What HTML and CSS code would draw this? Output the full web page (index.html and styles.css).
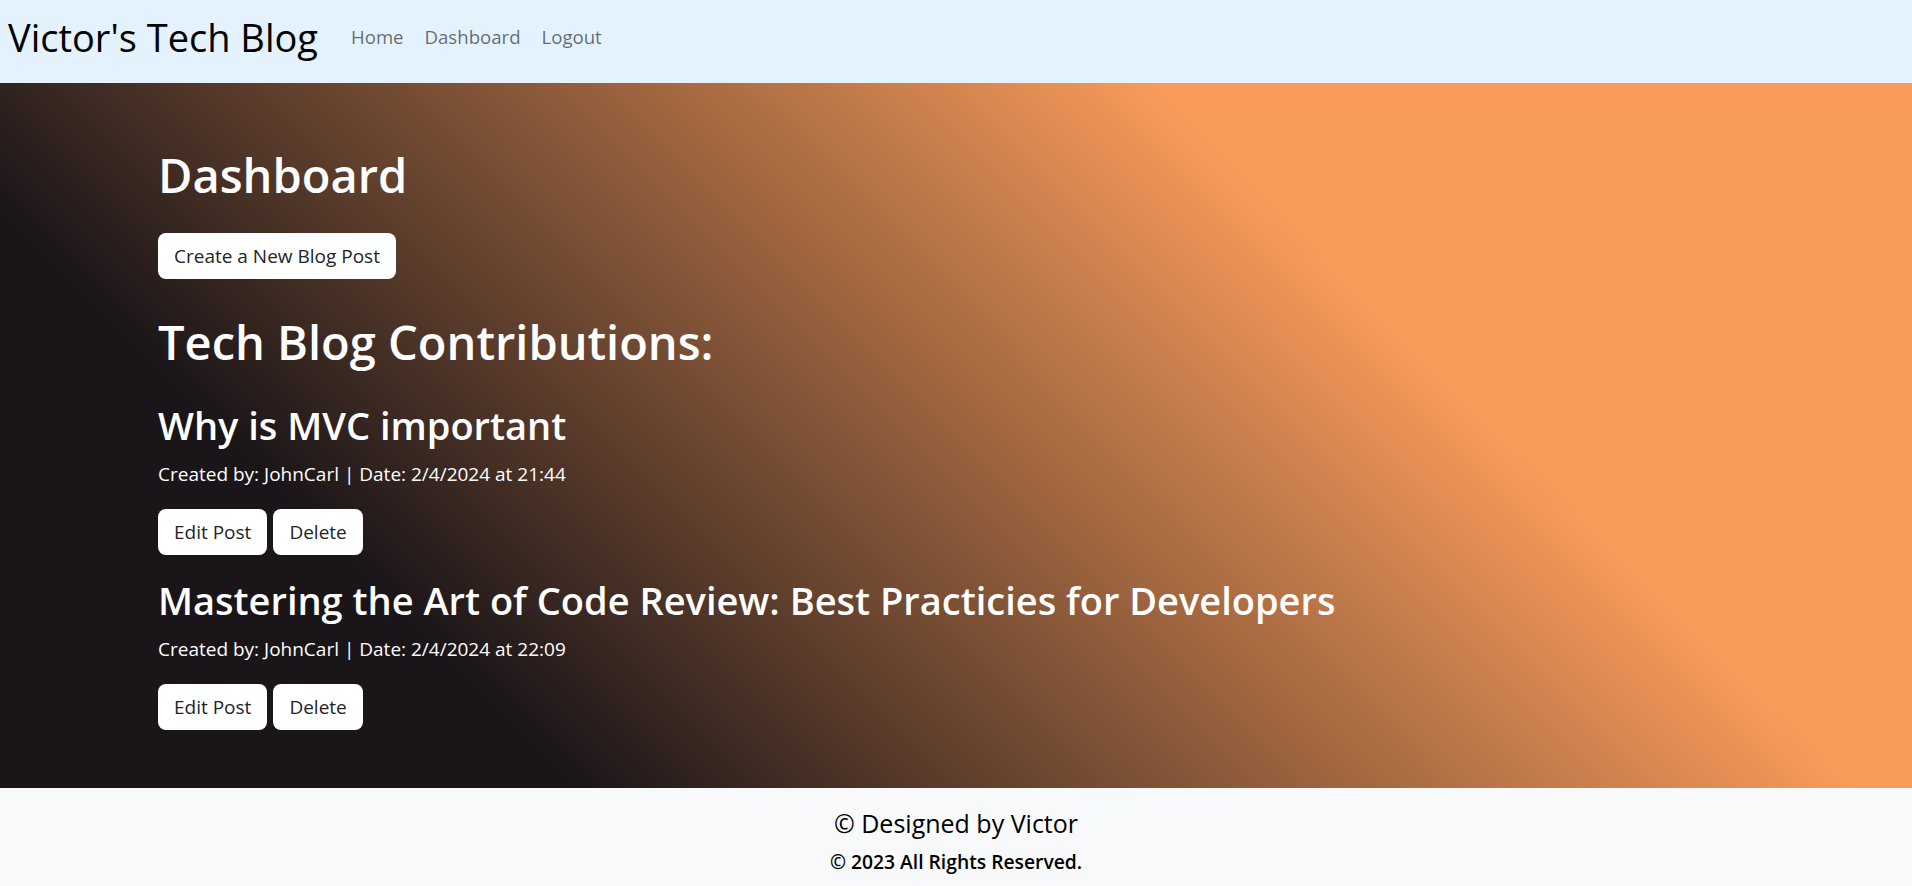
FILE: index.html
```html
<!DOCTYPE html>
<html lang="en">
<head>
<meta charset="utf-8">
<title>Victor's Tech Blog</title>
<link rel="stylesheet" href="styles.css">
</head>
<body>
<header class="navbar">
  <a class="brand" href="#">Victor's Tech Blog</a>
  <nav class="nav-links">
    <a class="nav-link" href="#">Home</a>
    <a class="nav-link" href="#">Dashboard</a>
    <a class="nav-link" href="#">Logout</a>
  </nav>
</header>
<main class="banner">
  <h1 class="page-title">Dashboard</h1>
  <button class="btn btn-create">Create a New Blog Post</button>
  <h2 class="section-title">Tech Blog Contributions:</h2>
  <article class="post">
    <h3 class="post-title">Why is MVC important</h3>
    <p class="post-meta">Created by: JohnCarl | Date: 2/4/2024 at 21:44</p>
    <div class="post-actions">
      <button class="btn">Edit Post</button>
      <button class="btn">Delete</button>
    </div>
  </article>
  <article class="post">
    <h3 class="post-title">Mastering the Art of Code Review: Best Practicies for Developers</h3>
    <p class="post-meta">Created by: JohnCarl | Date: 2/4/2024 at 22:09</p>
    <div class="post-actions">
      <button class="btn">Edit Post</button>
      <button class="btn">Delete</button>
    </div>
  </article>
</main>
<footer class="footer">
  <p class="footer-line">© Designed by Victor</p>
  <p class="footer-copy">© 2023 All Rights Reserved.</p>
</footer>
</body>
</html>
```
FILE: styles.css
```css
* { box-sizing: border-box; }
html, body { margin: 0; padding: 0; }
body {
  font-family: "Open Sans", "Noto Sans", "DejaVu Sans", sans-serif;
  color: #212529;
  background: #fff;
}
a { text-decoration: none; }

.navbar {
  height: 83px;
  background: #e3f2fd;
  display: flex;
  align-items: flex-start;
  padding: 0 8px;
}
.brand {
  font-size: 38px;
  line-height: 1;
  color: #000;
  margin-top: 18px;
  margin-right: 33px;
}
.nav-links {
  display: flex;
  gap: 21px;
  margin-top: 28px;
}
.nav-link {
  font-size: 18.6px;
  line-height: 1;
  color: rgba(0, 0, 0, 0.58);
}

.banner {
  height: 705px;
  padding: 64px 158px 0;
  color: #fff;
  background: linear-gradient(45deg, #1a1518 0%, #1a1518 22%, #f89b5a 71%, #f89b5a 100%);
}
.page-title {
  margin: 0;
  font-size: 47px;
  font-weight: 600;
  line-height: 1.2;
}
.btn {
  height: 46px;
  padding: 0 16px;
  border: 0;
  border-radius: 8px;
  background: #fff;
  color: #212529;
  font-family: inherit;
  font-size: 19px;
  cursor: pointer;
}
.btn-create {
  margin-top: 30px;
  display: block;
}
.section-title {
  margin: 35px 0 0;
  font-size: 47px;
  font-weight: 600;
  line-height: 1.2;
}
.post-title {
  margin: 32px 0 0;
  font-size: 38px;
  font-weight: 600;
  line-height: 1.2;
}
.post + .post .post-title { margin-top: 23px; }
.post-meta {
  margin: 12px 0 0;
  font-size: 19px;
  line-height: 1.5;
}
.post-actions {
  display: flex;
  gap: 6px;
  margin-top: 20px;
}

.footer {
  height: 98px;
  background: #f8f9fa;
  color: #000;
  text-align: center;
  padding-top: 19px;
}
.footer-line {
  margin: 0;
  font-size: 25px;
  line-height: 1.3;
}
.footer-copy {
  margin: 9px 0 0;
  font-size: 19.3px;
  font-weight: 600;
  line-height: 1.3;
}
```
